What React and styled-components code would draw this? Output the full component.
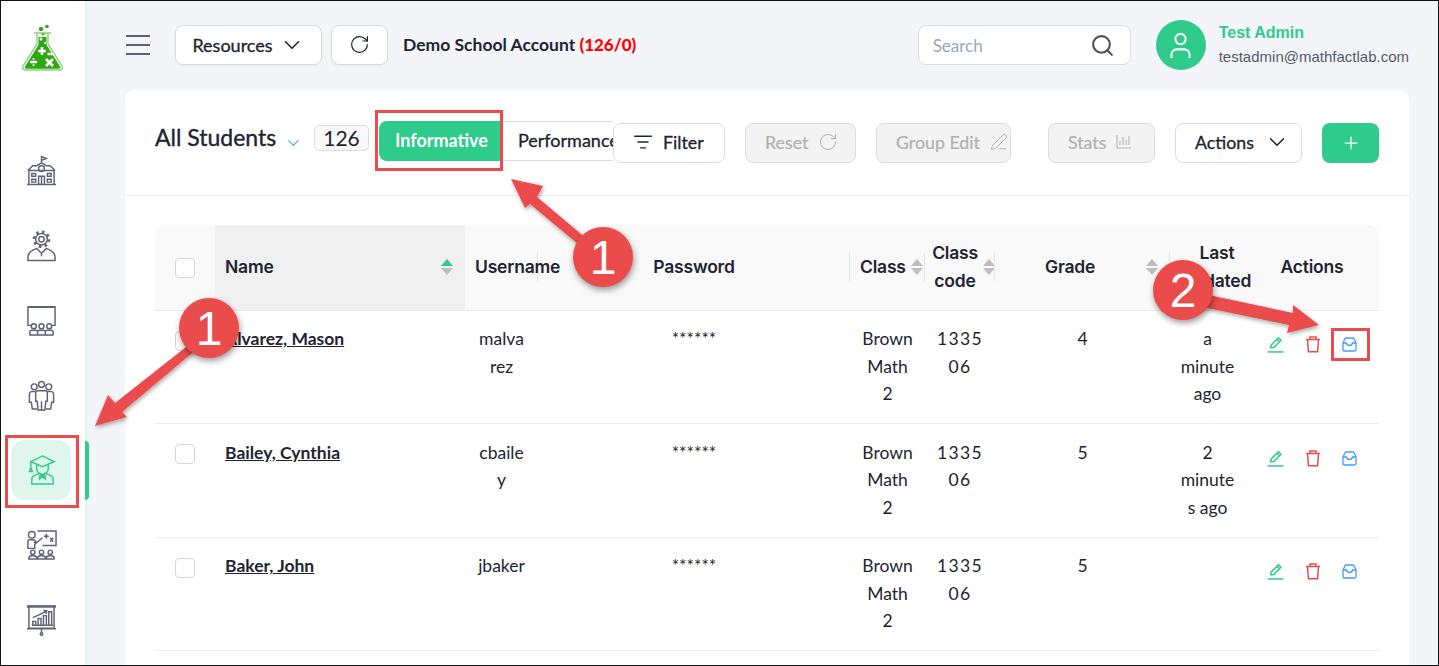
import styled, { createGlobalStyle } from 'styled-components';
import { ChevronDown, RotateCw, Search, ListFilter, PenLine, Plus, User } from 'lucide-react';

const green = '#2ecb8a';
const red = '#ea4b4b';

const GlobalStyle = createGlobalStyle`
	* { box-sizing: border-box; }
	html, body { margin: 0; height: 100%; }
	body { font-family: 'Lato', 'Open Sans', sans-serif; color: #1e2430; background: #fff; }
`;

const students = [
	{ name: 'Alvarez, Mason', user: ['malva', 'rez'], grade: 4, last: ['a', 'minute', 'ago'] },
	{ name: 'Bailey, Cynthia', user: ['cbaile', 'y'], grade: 5, last: ['2', 'minute', 's ago'] },
	{ name: 'Baker, John', user: ['jbaker'], grade: 5, last: [] },
];

const Logo = () => (
	<svg width="48" height="50" viewBox="0 0 48 50">
		<circle cx="22" cy="6" r="2.2" fill="#2ea80f" />
		<circle cx="28" cy="3.5" r="1.8" fill="#2ea80f" />
		<circle cx="24" cy="11" r="1.4" fill="#2ea80f" />
		<path d="M15 10 H32 M18 10 V21 L4 43 Q2.5 47 7 47 H40 Q44.5 47 43 43 L29 21 V10" fill="none" stroke="#8fce80" strokeWidth="1.4" />
		<path d="M19.5 14 V22 L6 43.5 Q5 45.8 8 45.8 H39 Q42 45.8 41 43.5 L27.5 22 V14 Z" fill="#2ea80f" />
		<circle cx="22" cy="16" r="1.5" fill="#fff" />
		<circle cx="26" cy="20" r="1" fill="#fff" />
		<path d="M23 24 V32 M19 28 H27 M28.5 31 H34.5 M11 39 H18 M27 36 L34 43 M34 36 L27 43" stroke="#fff" strokeWidth="2.6" fill="none" />
		<circle cx="14.5" cy="36" r="1" fill="#fff" />
		<circle cx="14.5" cy="42" r="1" fill="#fff" />
	</svg>
);

const navIcons = {
	school: (
		<>
			<path d="M16 1 V9 M16 1.5 L21 3.5 L16 5.5 M1 30.5 H31 M3 30 V16 H29 V30 M2 16 L7 11 H11 L16 8 L21 11 H25 L30 16" />
			<circle cx="16" cy="14" r="3" />
			<path d="M13 30 V22 H19 V30 M16 22 V30 M6 19 H10 V22 H6 Z M22 19 H26 V22 H22 Z M6 25 H10 V28 H6 Z M22 25 H26 V28 H22 Z" />
		</>
	),
	admin: (
		<>
			<circle cx="16" cy="9.5" r="2.8" />
			<circle cx="16" cy="9.5" r="6" />
			<circle cx="16" cy="9.5" r="7.6" strokeDasharray="2.6 3.4" strokeWidth="3" />
			<path d="M2 31.5 V28 C2 23 7 20.5 11 19 L16 24 L21 19 C25 20.5 30 23 30 28 V31.5 Z M16 24 V27" />
		</>
	),
	classroom: (
		<>
			<path d="M6 21 H2 V2 H30 V21 H26" />
			<path d="M2 2 H30" strokeWidth="2" />
			<circle cx="8" cy="22" r="2.6" />
			<circle cx="16" cy="22" r="2.6" />
			<circle cx="24" cy="22" r="2.6" />
			<path d="M4 31 V28 Q4 26 6 26 H10 Q12 26 12 28 V31 Z M12 31 V28 Q12 26 14 26 H18 Q20 26 20 28 V31 Z M20 31 V28 Q20 26 22 26 H26 Q28 26 28 28 V31 Z" />
		</>
	),
	group: (
		<>
			<circle cx="8.5" cy="7" r="3" />
			<circle cx="16" cy="4.5" r="3" />
			<circle cx="23.5" cy="7" r="3" />
			<path d="M12 11 H20 Q22 11 22 13 V22 H20.5 L19.5 31 H12.5 L11.5 22 H10 V13 Q10 11 12 11 Z M16 22 V31" />
			<path d="M10 12 H6 Q3.5 12 3.5 15 V23 H5.5 L6.5 30 H11.5 M22 12 H26 Q28.5 12 28.5 15 V23 H26.5 L25.5 30 H20.5" />
		</>
	),
	student: (
		<>
			<path d="M17 2 L29 8 L17 13 L5 8 Z M5 8 V14 M3.5 18 L5 14 L6.5 18 Z" />
			<path d="M11 11 V15 A6 6 0 0 0 23 15 V11" />
			<path d="M6 31 V26 Q6 23 9 22 L14 20 L17 23 L20 20 L25 22 Q28 23 28 26 V31 Z M14 23 L17 23 L20 23 L20 26 L17 23.5 L14 26 Z" />
		</>
	),
	teacher: (
		<>
			<path d="M12 2 H31 V17 H17 M21 5 V10 M18.5 7.5 H23.5 M25 9 L28 13 M28 9 L25 13 M17 9 L11 14 H8" />
			<circle cx="6" cy="6" r="3.4" />
			<path d="M2 20 V13 Q2 11 4 11 H8 L11 14 L9 16 V20 Z" />
			<circle cx="7" cy="24" r="2.2" />
			<circle cx="16" cy="24" r="2.2" />
			<circle cx="25" cy="24" r="2.2" />
			<path d="M3 31 V30 Q3 27.5 6 27.5 H8 Q11 27.5 11 30 V31 Z M12 31 V30 Q12 27.5 15 27.5 H17 Q20 27.5 20 30 V31 Z M21 31 V30 Q21 27.5 24 27.5 H26 Q29 27.5 29 30 V31 Z" />
		</>
	),
	chart: (
		<>
			<path d="M1 2.5 H31" strokeWidth="2.6" />
			<path d="M3 3 V25 H29 V3 M1 25.5 H31 M16 26 V30" />
			<circle cx="16" cy="31" r="1.3" />
			<path d="M7 22 V18 H10 V22 M12.5 22 V15 H15.5 V22 M18 22 V12 H21 V22 M23.5 22 V8 H26.5 V22 M6 22 H28 M7 14 L14 11 L20 8 M18 6.5 L21.5 7 L20.5 10" />
		</>
	),
};

const navItems = ['school', 'admin', 'classroom', 'group', 'student', 'teacher', 'chart'];

const EditIcon = () => (
	<svg width="17" height="17" viewBox="0 0 16 16" fill="none" stroke={green} strokeWidth="1.4">
		<path d="M3.5 11 L4 8.4 L10.8 1.6 L13.2 4 L6.4 10.8 Z M9.4 3 L11.8 5.4" />
		<path d="M0.5 15 H15.5" />
	</svg>
);

const TrashIcon = () => (
	<svg width="16" height="17" viewBox="0 0 16 17" fill="none" stroke={red} strokeWidth="1.5">
		<path d="M1 3.5 H15 M5 3.5 V1 H11 V3.5 M2.5 3.5 L3.4 15.8 H12.6 L13.5 3.5" />
	</svg>
);

const ArchiveIcon = () => (
	<svg width="15" height="15" viewBox="0 0 15 15" fill="none" stroke="#3f9bff" strokeWidth="1.3">
		<path d="M1 6 L3 1.8 Q3.4 1 4.3 1 H10.7 Q11.6 1 12 1.8 L14 6 V12.5 Q14 14 12.5 14 H2.5 Q1 14 1 12.5 Z" />
		<path d="M1 6 H4.5 Q5 8.5 7.5 8.5 Q10 8.5 10.5 6 H14" />
	</svg>
);

const StatsIcon = () => (
	<svg width="15" height="15" viewBox="0 0 15 15" fill="none" stroke="#b5b5b5" strokeWidth="1.1">
		<path d="M1 1 V14 H15 M4 11 V7 M7 11 V3 M10 11 V6 M13 11 V2" />
	</svg>
);

const App = () => (
	<Frame>
		<GlobalStyle />
		<Sidebar>
			<LogoBox><Logo /></LogoBox>
			<Nav>
				{navItems.map(item => (
					<NavItem key={item} $active={item === 'student'}>
						<NavIcon viewBox="0 0 32 33" $active={item === 'student'}>{navIcons[item]}</NavIcon>
					</NavItem>
				))}
			</Nav>
		</Sidebar>
		<Main>
			<Topbar>
				<Hamburger><i /><i /><i /></Hamburger>
				<TopButton $wide>Resources <ChevronDown size={26} strokeWidth={1.4} /></TopButton>
				<TopButton><RotateCw size={21} strokeWidth={1.4} /></TopButton>
				<School>Demo School Account <b>(126/0)</b></School>
				<SearchBox>
					<SearchInput placeholder="Search" />
					<Search size={25} strokeWidth={2} color="#4a5160" />
				</SearchBox>
				<Avatar><User size={31} strokeWidth={1.6} color="#fff" /></Avatar>
				<Profile>
					<ProfileName>Test Admin</ProfileName>
					<ProfileMail>testadmin@mathfactlab.com</ProfileMail>
				</Profile>
			</Topbar>
			<Card>
				<CardHead>
					<Title>All Students</Title>
					<ChevronDown size={20} strokeWidth={1.3} color="#3f9bff" />
					<Count>126</Count>
					<Tabs>
						<Tab $active>Informative</Tab>
						<Tab>Performance</Tab>
					</Tabs>
					<ActionButton $w={112}><ListFilter size={20} strokeWidth={1.7} /> Filter</ActionButton>
					<ActionButton $w={111} $off $ml={20}>Reset <RotateCw size={20} strokeWidth={1.2} /></ActionButton>
					<ActionButton $w={135} $off $ml={20}>Group Edit <PenLine size={18} strokeWidth={1.3} /></ActionButton>
					<ActionButton $w={107} $off $ml={37}>Stats <StatsIcon /></ActionButton>
					<ActionButton $w={127} $ml={20}>Actions <ChevronDown size={26} strokeWidth={1.4} /></ActionButton>
					<AddButton><Plus size={20} strokeWidth={1.5} /></AddButton>
				</CardHead>
				<TableWrap>
					<Table>
						<colgroup>
							{[60, 250, 73, 312, 75, 70, 175, 75, 134].map((w, i) => <col key={i} width={w} />)}
						</colgroup>
						<thead>
							<tr>
								<Th $first $center><Check /></Th>
								<Th $sorted $pad="0 12px 0 10px"><HeadInner>Name<Sort $on /></HeadInner></Th>
								<Th $bar><Overflowing>Username</Overflowing></Th>
								<Th $center $bar>Password</Th>
								<Th $bar $pad="0 2px 0 10px"><HeadInner>Class<Sort /></HeadInner></Th>
								<Th $bar $pad="0 0 0 4px"><HeadInner><CodeHead>Class code</CodeHead><Sort /></HeadInner></Th>
								<Th $bar $pad="0 12px 0 10px"><HeadInner><GradeHead>Grade</GradeHead><Sort /></HeadInner></Th>
								<Th $center $pad="0 4px"><LastHead>Last updated</LastHead></Th>
								<Th $center $last>Actions</Th>
							</tr>
						</thead>
						<tbody>
							{students.map(s => (
								<tr key={s.name}>
									<Td $center><Check /></Td>
									<Td><NameLink>{s.name}</NameLink></Td>
									<Td $center>{s.user.map(l => <Line key={l}>{l}</Line>)}</Td>
									<Td $center>******</Td>
									<Td $center><Line>Brown</Line><Line>Math</Line><Line>2</Line></Td>
									<Td $center><Spaced>1335</Spaced><Spaced>06</Spaced></Td>
									<Td $center>{s.grade}</Td>
									<Td $center>{s.last.map(l => <Line key={l}>{l}</Line>)}</Td>
									<Td>
										<RowActions><EditIcon /><TrashIcon /><ArchiveIcon /></RowActions>
									</Td>
								</tr>
							))}
						</tbody>
					</Table>
				</TableWrap>
			</Card>
		</Main>

		<ActiveBar />
		<Arrows viewBox="0 0 1439 666">
			<defs>
				<filter id="arrowShadow" x="-20%" y="-20%" width="140%" height="140%">
					<feDropShadow dx="1" dy="2" stdDeviation="2" floodColor="#000" floodOpacity="0.35" />
				</filter>
			</defs>
			<g fill={red} filter="url(#arrowShadow)">
				<path d="M511 179 L543 186 L537 197 L600 250 L590 254 L530 204 L525 208 Z" />
				<path d="M95 426 L108 395 L115 403 L200 336 L210 338 L122 412 L127 417 Z" />
				<path d="M1319 325 L1293 305 L1293 313 L1190 291 L1188 304 L1289 325 L1287 333 Z" />
			</g>
		</Arrows>
		<Marker $x={375} $y={110} $w={128} $h={61} />
		<Marker $x={5} $y={435} $w={74} $h={73} />
		<Marker $x={1331} $y={328} $w={39} $h={33} />
		<Step $x={603} $y={257}>1</Step>
		<Step $x={209} $y={328}>1</Step>
		<Step $x={1183} $y={290}>2</Step>
	</Frame>
);

export default App;

const Frame = styled.div`
	position: relative;
	display: flex;
	height: 100vh;
	overflow: hidden;
	border: 1px solid #111;
`;

const Sidebar = styled.aside`
	flex: 0 0 86px;
	background: #fff;
	border-right: 2px solid #def5ec;
`;

const LogoBox = styled.div`
	display: flex;
	justify-content: center;
	padding-top: 22px;
	height: 140px;
`;

const Nav = styled.nav`
	display: flex;
	flex-direction: column;
	align-items: center;
	gap: 14.85px;
	padding-right: 4px;
`;

const NavItem = styled.div`
	display: flex;
	align-items: center;
	justify-content: center;
	width: 60px;
	height: 60px;
	border-radius: 14px;
	background: ${p => (p.$active ? '#dff6ec' : 'transparent')};
`;

const NavIcon = styled.svg`
	width: 31px;
	height: 32px;
	fill: none;
	stroke: ${p => (p.$active ? green : '#5e6375')};
	stroke-width: 1.5;
`;

const ActiveBar = styled.div`
	position: absolute;
	left: 84px;
	top: 440px;
	width: 3.5px;
	height: 59px;
	background: ${green};
	border-radius: 0 6px 6px 0;
`;

const Main = styled.main`
	flex: 1;
	min-width: 0;
	background: #f3f5f9;
	padding: 0 29px 0 38px;
	display: flex;
	flex-direction: column;
`;

const Topbar = styled.header`
	flex: 0 0 89px;
	padding-bottom: 1px;
	display: flex;
	align-items: center;
`;

const Hamburger = styled.div`
	width: 24px;
	display: flex;
	flex-direction: column;
	gap: 6.5px;
	margin: 0 25px 0 1px;
	i {
		display: block;
		height: 2.5px;
		background: #5a6472;
	}
`;

const TopButton = styled.button`
	display: flex;
	align-items: center;
	justify-content: center;
	gap: 6px;
	height: 40px;
	width: ${p => (p.$wide ? '147px' : '57px')};
	margin-right: 9px;
	padding: 0 0 1px;
	background: #fff;
	border: 1px solid #dcdcdc;
	border-radius: 8px;
	font: 400 18px 'Lato', sans-serif;
	-webkit-text-stroke: 0.3px #1e2430;
	color: #1e2430;
	box-shadow: 0 1px 2px rgba(0, 0, 0, 0.05);
`;

const School = styled.div`
	margin: 0 0 2px 6px;
	font-size: 17.5px;
	font-weight: 700;
	color: #1e2430;
	b { color: #f00; font-size: 17px; }
`;

const SearchBox = styled.div`
	margin-left: auto;
	width: 213px;
	height: 40px;
	display: flex;
	align-items: center;
	padding: 0 15px 0 14px;
	background: #fff;
	border: 1px solid #dcdcdc;
	border-radius: 8px;
`;

const SearchInput = styled.input`
	flex: 1;
	min-width: 0;
	border: 0;
	outline: 0;
	background: transparent;
	font: 17px 'Lato', sans-serif;
	padding: 0;
	&::placeholder { color: #9aa6ba; opacity: 1; }
`;

const Avatar = styled.div`
	width: 50px;
	height: 50px;
	margin-left: 25px;
	border-radius: 50%;
	background: ${green};
	display: flex;
	align-items: center;
	justify-content: center;
`;

const Profile = styled.div`
	margin-left: 13px;
	font-family: 'Liberation Sans', Arial, sans-serif;
`;

const ProfileName = styled.div`
	font-size: 16px;
	font-weight: 700;
	color: ${green};
	margin-bottom: 6px;
	line-height: 18px;
`;

const ProfileMail = styled.div`
	font-size: 15px;
	color: #555b68;
	line-height: 18px;
`;

const Card = styled.section`
	flex: 1;
	min-height: 0;
	background: #fff;
	border-radius: 10px 10px 0 0;
`;

const CardHead = styled.div`
	height: 106px;
	padding: 0 30px;
	display: flex;
	align-items: center;
	border-bottom: 1px solid #ececec;
`;

const Title = styled.div`
	flex: 0 0 auto;
	white-space: nowrap;
	font-size: 23px;
	font-weight: 400;
	-webkit-text-stroke: 0.35px #1e2430;
	margin: -11px 8px 0 0;
	color: #1e2430;
`;

const Count = styled.div`
	flex: 0 0 55px;
	height: 26px;
	margin: -10px 10px 0 11px;
	display: flex;
	align-items: center;
	justify-content: center;
	font-size: 21px;
	background: #f9f9f9;
	border: 1px solid #dedede;
	border-radius: 5px;
`;

const Tabs = styled.div`
	height: 40px;
	margin-top: -4px;
	display: flex;
	overflow: hidden;
	flex: 0 0 234px;
`;

const Tab = styled.div`
	flex: 0 0 auto;
	display: flex;
	align-items: center;
	padding: 0 15px 1px;
	font-size: 18px;
	font-weight: ${p => (p.$active ? 700 : 400)};
	-webkit-text-stroke: ${p => (p.$active ? '0' : '0.3px #1e2430')};
	color: ${p => (p.$active ? '#fff' : '#1e2430')};
	background: ${p => (p.$active ? green : '#fff')};
	border: 1px solid ${p => (p.$active ? green : '#dcdcdc')};
	border-left: ${p => (p.$active ? '' : '0')};
	border-right: 0;
	border-radius: ${p => (p.$active ? '8px 0 0 8px' : '0')};
`;

const ActionButton = styled.button`
	flex: 0 0 ${p => p.$w}px;
	height: 40px;
	margin-left: ${p => p.$ml || 0}px;
	padding: 0 0 2px 19px;
	display: flex;
	align-items: center;
	gap: 10px;
	white-space: nowrap;
	font: 400 17.8px 'Lato', sans-serif;
	-webkit-text-stroke: ${p => (p.$off ? '0.2px #b0b0b0' : '0.3px #1e2430')};
	color: ${p => (p.$off ? '#b0b0b0' : '#1e2430')};
	background: ${p => (p.$off ? '#f3f3f3' : '#fff')};
	border: 1px solid #dcdcdc;
	border-radius: 8px;
`;

const AddButton = styled.button`
	flex: 0 0 57px;
	height: 40px;
	margin-left: 20px;
	display: flex;
	align-items: center;
	justify-content: center;
	color: #fff;
	background: ${green};
	border: 0;
	border-radius: 8px;
`;

const TableWrap = styled.div`
	padding: 29px 30px 0;
`;

const Table = styled.table`
	width: 100%;
	table-layout: fixed;
	border-collapse: collapse;
`;

const Th = styled.th`
	position: relative;
	height: 85px;
	padding: ${p => p.$pad || '0 10px'};
	font: 600 17.5px/28px 'Inter', sans-serif;
	letter-spacing: -0.2px;
	color: #1e2430;
	text-align: ${p => (p.$center ? 'center' : 'left')};
	background: ${p => (p.$sorted ? '#f0f0f0' : '#f9f9f9')};
	border-bottom: 1px solid #ececec;
	border-radius: ${p => (p.$first ? '10px 0 0 0' : p.$last ? '0 10px 0 0' : '0')};
	&::after {
		content: '';
		display: ${p => (p.$bar ? 'block' : 'none')};
		position: absolute;
		right: 0;
		top: 28px;
		height: 28px;
		width: 1px;
		background: #e6e6e6;
	}
`;

const HeadInner = styled.div`
	display: flex;
	align-items: center;
	justify-content: space-between;
`;

const Overflowing = styled.span`
	position: relative;
	z-index: 1;
	white-space: nowrap;
`;

const CodeHead = styled.span`
	text-align: center;
	width: 52px;
`;

const GradeHead = styled.span`
	margin-left: 40px;
`;

const LastHead = styled.span`
	position: relative;
	z-index: 1;
	display: block;
	margin: 0 -14px 0 5px;
`;

const Sort = styled.span`
	flex: 0 0 12px;
	height: 17px;
	display: block;
	&::before, &::after {
		content: '';
		display: block;
		width: 0;
		height: 0;
		border-left: 6px solid transparent;
		border-right: 6px solid transparent;
	}
	&::before {
		border-bottom: 7px solid ${p => (p.$on ? green : '#bdbdbd')};
		margin-bottom: 2px;
	}
	&::after {
		border-top: 7px solid #bdbdbd;
	}
`;

const Td = styled.td`
	padding: 14.5px 10px 15.5px;
	font-size: 17.5px;
	line-height: 27.5px;
	vertical-align: top;
	text-align: ${p => (p.$center ? 'center' : 'left')};
	color: #1e2430;
	border-bottom: 1px solid #ececec;
	height: 113.5px;
`;

const Line = styled.span`
	display: block;
`;

const Spaced = styled.span`
	display: block;
	letter-spacing: 1.4px;
	margin: 0 -8px;
`;

const NameLink = styled.a`
	font-weight: 700;
	font-size: 17.5px;
	color: #1e2430;
	text-decoration: underline;
`;

const Check = styled.span`
	display: inline-block;
	vertical-align: middle;
	width: 20px;
	height: 20px;
	background: #fff;
	border: 1px solid #d5d5d5;
	border-radius: 4px;
`;

const RowActions = styled.div`
	display: flex;
	align-items: center;
	gap: 21px;
	padding: 11px 0 0 22px;
	margin: 0 -10px;
`;

const Arrows = styled.svg`
	position: absolute;
	z-index: 2;
	left: -1px;
	top: -1px;
	width: 1439px;
	height: 666px;
	pointer-events: none;
`;

const Marker = styled.div`
	position: absolute;
	z-index: 2;
	left: ${p => p.$x - 1}px;
	top: ${p => p.$y - 1}px;
	width: ${p => p.$w}px;
	height: ${p => p.$h}px;
	border: 3px solid ${red};
	pointer-events: none;
`;

const Step = styled.div`
	position: absolute;
	z-index: 2;
	left: ${p => p.$x - 31}px;
	top: ${p => p.$y - 31}px;
	width: 60px;
	height: 60px;
	border-radius: 50%;
	display: flex;
	align-items: center;
	justify-content: center;
	font: 48px 'Liberation Sans', Arial, sans-serif;
	color: #fff;
	background: ${red};
	box-shadow: 1px 3px 6px rgba(0, 0, 0, 0.4);
`;
